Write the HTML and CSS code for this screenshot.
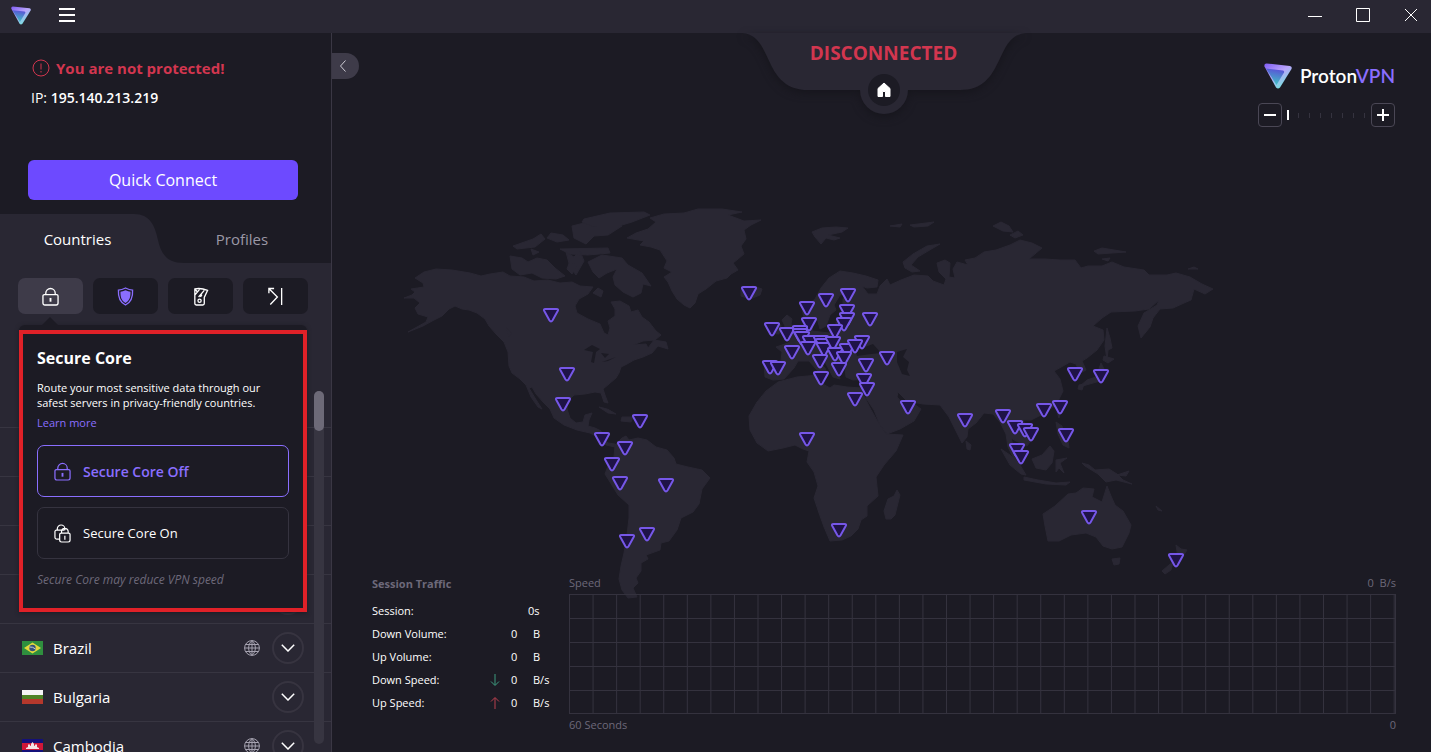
FILE: index.html
```html
<!DOCTYPE html>
<html lang="en">
<head>
    <meta charset="utf-8">
    <title>ProtonVPN</title>
    <link rel="stylesheet" href="styles.css">
</head>
<body>
<!-- shared icons -->
<svg class="defs" aria-hidden="true">
    <defs>
        <linearGradient id="logo-outer" x1="0" y1="0" x2="0.7" y2="1">
            <stop offset="0" stop-color="#7f5cf5"/>
            <stop offset="0.5" stop-color="#b9a5fb"/>
            <stop offset="1" stop-color="#6fe8dc"/>
        </linearGradient>
        <linearGradient id="logo-inner" x1="0.6" y1="0" x2="0.4" y2="1">
            <stop offset="0" stop-color="#5a4fd8"/>
            <stop offset="1" stop-color="#3fc7c4"/>
        </linearGradient>
        <symbol id="logo" viewBox="0 0 28 26">
            <path fill="url(#logo-outer)" d="M2.500 .5L26 3q2.500 .6 1.500 3L16 24.500q-2 2-4 0L.5 3.500Q-.2 .8 2.500 .5z"/>
            <path fill="url(#logo-inner)" d="M2 5.500L19 7.500q1.500 .4 1 2L12.500 22z"/>
        </symbol>
        <symbol id="lock" viewBox="0 0 18 20">
            <path class="line" d="M2.500 8h13a1.500 1.500 0 0 1 1.500 1.500v7.500a2 2 0 0 1-2 2H3a2 2 0 0 1-2-2V9.500A1.500 1.500 0 0 1 2.500 8zM4 8V6.500a5 5 0 0 1 10 0V8"/>
            <path class="line" stroke-width="2" d="M9 11.500v4"/>
        </symbol>
        <symbol id="globe" viewBox="0 0 16 16">
            <path class="line" d="M8 .6a7.400 7.400 0 1 0 0 14.800A7.400 7.400 0 1 0 8 .6zM8 .6v14.800M.6 8h14.800M1.800 4.500h12.400M1.800 11.500h12.400M8 .6C3.500 4.500 3.500 11.500 8 15.400M8 .6c4.500 3.900 4.500 10.900 0 14.800"/>
        </symbol>
        <symbol id="chevron" viewBox="0 0 14 8">
            <path class="line" d="M.8 .8L7 7L13.200 .8"/>
        </symbol>
        <path id="pin" transform="translate(9 9)" d="M-5.500 -6h11q2.400 0 1.200 2.100L1.600 5.200q-1.600 2.400-3.200 0L-6.700 -3.900Q-7.900 -6-5.500 -6z"/>
    </defs>
</svg>

<header class="titlebar">
    <svg class="app-logo"><use href="#logo"/></svg>
    <button class="menu-btn" aria-label="Menu"><span></span><span></span><span></span></button>
    <div class="window-btns">
        <button aria-label="Minimize"><svg viewBox="0 0 14 14"><path class="line" d="M0 8.500h14"/></svg></button>
        <button aria-label="Maximize"><svg viewBox="0 0 14 14"><path class="line" d="M.5 .5h13v13h-13z"/></svg></button>
        <button aria-label="Close"><svg viewBox="0 0 14 14"><path class="line" d="M1 1l12 12M13 1L1 13"/></svg></button>
    </div>
</header>

<div class="app">
    <aside class="sidebar">
        <section class="status">
            <p class="warning">
                <svg viewBox="0 0 18 18"><circle class="line" cx="9" cy="9" r="8"/><path class="line" d="M9 4.500v6M9 12v1.500"/></svg>
                You are not protected!
            </p>
            <p class="ip">IP: <b>195.140.213.219</b></p>
            <button class="quick-connect">Quick Connect</button>
        </section>

        <nav class="tabs">
            <svg class="tab-shape" viewBox="0 0 184 49"><path d="M0 0H134C150 0 155 12 158 26C161 41 168 49 184 49H0z"/></svg>
            <button class="tab active">Countries</button>
            <button class="tab">Profiles</button>
        </nav>

        <div class="panel">
            <div class="filters">
                <button class="filter active" aria-label="Secure Core"><svg viewBox="0 0 18 20"><use href="#lock"/></svg></button>
                <button class="filter shield" aria-label="NetShield">
                    <svg viewBox="0 0 18 20"><path class="line" d="M9 1q4 2.200 7.500 2.200C16.900 10 15.500 16 9 19C2.500 16 1.100 10 1.500 3.200Q5 3.200 9 1z"/><path class="fill" d="M9 3.500q3 1.500 5.300 1.600C14.500 10.500 13.300 14.500 9 17C4.700 14.500 3.500 10.500 3.700 5.100Q6 5 9 3.500z"/></svg>
                </button>
                <button class="filter" aria-label="Kill switch">
                    <svg viewBox="0 0 18 20"><path class="line" d="M3 2v15.500a1.500 1.500 0 0 0 1.500 1.500h7a1.500 1.500 0 0 0 1.500-1.500V11L16.500 3.500Q9 .5 3 2zM3.500 2.500L6 5.500M3 8.500L8 2.500M13 3.500L7 10.500M10.500 8l-1.500 2.500"/><circle class="line" cx="8" cy="14.500" r="1.700"/></svg>
                </button>
                <button class="filter" aria-label="Port forwarding">
                    <svg viewBox="0 0 18 20"><path class="line" d="M3.500 18.500L11 10.500L2.500 2M2 6.500V1.500h5.500M15.500 1v18"/></svg>
                </button>
            </div>

            <ul class="countries">
                <li><button class="expand" aria-label="Expand"><svg><use href="#chevron"/></svg></button></li>
                <li><button class="expand" aria-label="Expand"><svg><use href="#chevron"/></svg></button></li>
                <li><button class="expand" aria-label="Expand"><svg><use href="#chevron"/></svg></button></li>
                <li><button class="expand" aria-label="Expand"><svg><use href="#chevron"/></svg></button></li>
                <li>
                    <svg class="flag" viewBox="0 0 21 14"><path fill="#2f8f3e" d="M0 0h21v14H0z"/><path fill="#e3d83c" d="M10.500 1.500L19 7l-8.500 5.500L2 7z"/><circle cx="10.500" cy="7" r="3.200" fill="#34507c"/><path stroke="#c9d4cf" fill="none" d="M7.500 6q3-.5 6 2"/></svg>
                    <span class="name">Brazil</span>
                    <svg class="globe"><use href="#globe"/></svg>
                    <button class="expand" aria-label="Expand Brazil"><svg><use href="#chevron"/></svg></button>
                </li>
                <li>
                    <svg class="flag" viewBox="0 0 21 14"><path fill="#f5f5f5" d="M0 0h21v5H0z"/><path fill="#4f8427" d="M0 5h21v5H0z"/><path fill="#b5382c" d="M0 9h21v5H0z"/></svg>
                    <span class="name">Bulgaria</span>
                    <button class="expand" aria-label="Expand Bulgaria"><svg><use href="#chevron"/></svg></button>
                </li>
                <li>
                    <svg class="flag" viewBox="0 0 21 14"><path fill="#14107a" d="M0 0h21v14H0z"/><path fill="#cf1738" d="M0 4h21v7H0z"/><path fill="#f3e3e6" d="M4 10V9l2-1V6l1-1l1 1v1l1-.5V5l1.500-2L12 5v1.500l1 .5V6l1-1l1 1v2l2 1v1z"/></svg>
                    <span class="name">Cambodia</span>
                    <svg class="globe"><use href="#globe"/></svg>
                    <button class="expand" aria-label="Expand Cambodia"><svg><use href="#chevron"/></svg></button>
                </li>
            </ul>
            <div class="scrollbar"><div class="thumb"></div></div>

            <div class="popover">
                <div class="popover-body">
                    <h2>Secure Core</h2>
                    <p>Route your most sensitive data through our safest servers in privacy-friendly countries.</p>
                    <a href="#">Learn more</a>
                    <button class="option selected"><svg viewBox="0 0 18 20"><use href="#lock"/></svg>Secure Core Off</button>
                    <button class="option">
                        <svg viewBox="0 0 18 20"><path class="line" d="M5.500 16H3a2 2 0 0 1-2-2V8a1.500 1.500 0 0 1 1.500-1.500H11M3.500 6.500V5a4 4 0 0 1 8 0v1.500M7.500 9.500h8a1.500 1.500 0 0 1 1.500 1.500v6a2 2 0 0 1-2 2H8a2 2 0 0 1-2-2v-6a1.500 1.500 0 0 1 1.500-1.500zM8 9.500V8a3.500 3.500 0 0 1 7 0v1.500M11.500 12.500v4"/></svg>
                        Secure Core On
                    </button>
                    <p class="note">Secure Core may reduce VPN speed</p>
                </div>
            </div>
        </div>
    </aside>

    <main class="main">
        <svg class="map" viewBox="332 33 1099 719">
            <g class="land">
                <!-- north and central america -->
                <path d="M415 278L424 272L436 269L452 270L470 273L481 276L490 274L503 272L510 276L524 277L534 281L548 280L560 283L572 282L580 286L593 287L588 294L579 299L575 306L577 313L588 319L600 324L604 333L608 335L610 328L608 321L615 316L615 309L611 302L620 301L629 306L631 312L638 310L642 317L649 322L656 331L661 335L655 340L643 341L633 345L646 344L648 348L654 340L666 342L668 349L658 346L652 353L643 357L634 360L627 364L621 367L619 373L616 378L609 384L603 389L605 395L608 403L604 402L601 393L595 392L585 394L574 395L568 401L567 409L570 418L576 423L583 422L585 415L592 413L589 420L588 426L595 428L601 431L603 438L608 443L615 444L615 447L606 445L598 437L590 433L577 430L564 425L554 418L550 409L543 402L536 394L532 387L529 388L535 398L542 409L538 407L531 397L526 385L520 379L512 373L509 366L508 352L504 342L496 334L489 326L485 319L477 313L469 310L462 309L455 306L449 309L442 316L434 320L423 326L408 332L426 322L428 317L418 314L415 308L420 303L414 298L404 298L412 295L415 292L411 289L424 287L423 283z"/>
                <path d="M512 333l-6-5l3 9zM599 407q9 1 17 7l-8-1zM622 417h11l-2 5l-10-1z"/>
                <!-- arctic archipelago -->
                <path d="M510 256l12 2l6 4l9-4l10 2l8 8l10 8l-9 3l-14-1l-10-5l-12 2l-8-6zM513 246l20-7l8-5l4 5l-10 8l-18 2zM551 233l12 2l6 5l-12 2l-10-4zM566 252l8 5l6-6l4 10l-8 14l-6-8zM560 249l48-1l2 5l-22 2l-18-1zM572 226l12-3l10 4l16-3l12 2l-14 9l-14 1l-8 8l-12-6zM584 219l26-6l34-1l6 3l-18 7l-20 6l-20-2l-10-4zM588 262l14-7l20 3l6 7l14 8l9 13l-8-2l-2 9l-8 4l-10-5l-8-7l-2-8l4-8l-10 4l-8 5l-6-6z"/>
                <path d="M593 293l5-5l5 3l-2 6zM570 261l7 5l-5 8l-5-5zM531 249l8 3l-6 3z"/>
                <!-- greenland -->
                <path d="M627 238L636 233L648 229L656 222L650 218L664 214L684 213L698 209L722 209L742 212L728 215L744 221L761 220L751 225L744 230L746 239L741 246L744 254L738 259L733 263L738 270L731 274L727 278L716 281L706 289L698 294L695 303L690 308L684 305L677 299L672 291L668 282L664 277L672 272L664 268L667 261L660 250L651 247L640 245L644 241z"/>
                <!-- south america -->
                <path d="M615 445L622 438L626 436L629 440L638 438L647 440L656 447L667 450L674 458L676 464L688 467L702 470L710 478L702 489L699 504L693 512L681 518L677 530L669 541L661 543L660 550L646 555L648 559L641 563L641 571L636 578L638 583L633 588L637 597L628 598L622 590L619 579L621 566L624 553L627 535L629 518L629 505L618 495L610 482L605 474L608 466L614 457z"/>
                <!-- africa -->
                <path d="M778 382L797 377L818 375L821 383L830 388L834 385L847 387L862 388L864 396L870 408L878 422L886 434L903 435L896 451L884 465L876 477L878 496L867 506L867 516L861 520L858 529L851 536L842 540L830 541L824 527L819 513L814 498L818 486L814 472L807 462L809 451L803 449L795 445L783 448L768 451L757 443L750 430L749 416L757 402L766 391z"/>
                <path d="M897 490l3 5l-5 20l-4 4h-5l-2-8l4-12l6-3z"/>
                <!-- europe and asia -->
                <path d="M764 363L781 361L782 352L776 347L788 343L797 336L807 331L809 318L813 321L812 331L829 333L837 330L836 322L843 319L842 314L850 311L843 309L843 299L848 293L840 295L834 305L836 310L830 315L826 326L820 329L817 318L805 321L802 310L815 299L821 288L829 278L840 271L853 273L866 276L878 280L877 287L867 288L862 286L868 294L877 294L880 286L884 282L887 279L890 285L901 280L914 275L928 276L933 281L944 285L946 279L939 272L937 263L945 260L950 263L949 277L955 278L953 269L957 262L968 265L965 260L975 258L984 252L996 250L1010 245L1020 240L1032 243L1042 248L1029 259L1045 259L1060 260L1075 260L1081 268L1088 266L1102 266L1112 262L1124 267L1144 270L1149 275L1167 275L1176 273L1190 277L1202 284L1213 289L1205 294L1194 289L1191 300L1184 303L1173 308L1160 309L1153 318L1150 327L1141 338L1138 326L1144 313L1157 305L1159 300L1149 309L1135 311L1111 312L1102 318L1093 326L1103 330L1104 340L1097 350L1087 358L1082 361L1086 370L1080 373L1076 364L1070 362L1063 366L1054 371L1060 379L1063 391L1056 405L1043 414L1031 420L1023 420L1027 429L1033 438L1027 446L1016 441L1011 438L1014 449L1020 456L1023 464L1014 459L1008 447L1006 434L1000 422L993 414L984 413L976 423L968 429L967 437L962 443L957 433L949 417L940 405L923 404L907 401L898 392L897 397L904 405L914 404L921 409L914 421L900 429L887 434L880 425L874 410L866 398L866 387L867 379L853 380L846 377L845 368L838 370L840 379L833 377L825 362L817 354L815 359L825 368L828 376L823 377L809 361L798 361L794 368L784 379L773 380L765 377z"/>
                <path d="M784 340l2-4l-3-4l2-6l-3-6l5-5l5 4l-1 5l5 6l6 6l-4 6zM771 333l3-9l7 1l-2 9zM741 290l12-4l9 3l-2 6l-10 4l-9-3z"/>
                <!-- arctic islands north of eurasia -->
                <path d="M812 232l10-4l14-1l12 1l-6 4l-14 3l12 3l-6 2l-8-2l-5 6l-6-7zM890 226l12-2l-2 3zM910 225l24-3l-6 4l-14 1zM905 268l-2-6l10-8l14-8l13-2l-12 7l-10 6l-7 8l9 6l-8 1zM993 226l8-4l8 4l4 6l-10-1zM1010 235l8-4l5 4l-8 3zM1094 251l8-3l12 2l12 2l-14 1l-14 1zM1102 259l8-1l-2 3zM1188 269l6-2l4 2z"/>
                <!-- japan, islands of south-east asia, new guinea -->
                <path d="M1107 328l3 10l2 10l-4 2l-1 10l-2-14zM1104 356l10 3l-6 4l-5-3zM1101 363l4 8l-5 10l-14 4l-7 2l8-7l9-3zM1079 385l5-1l-2 6l-4-1zM1057 412l4-2l-2 8zM1056 422l6 4l2 8l4 6l1 8l-6-3l-5-11zM966 441l5 4l-1 5l-3-1zM1001 449l9 6l10 10l6 10l-5-1l-11-9zM1032 459l10-4l8-9l4 5l-2 12l-6 7l-10-2zM1024 477l14 3l18 3l14-1l-4 3l-20-1l-22-4zM1056 460l11-2l-7 5l4 10l-5-5l-3 4zM1085 466l-3-3l7 2l6 5l14-1l8 5l6 6l9 4l-8-2l-8-2l-10 2l-8-8zM1117 475l12-4l-3 5z"/>
                <!-- australia and new zealand -->
                <path d="M1043 514L1055 506L1068 494L1076 493L1083 488L1094 489L1092 497L1102 502L1107 486L1111 496L1115 505L1123 511L1131 525L1129 533L1122 547L1112 549L1103 546L1096 537L1086 533L1071 535L1059 541L1048 541L1045 526zM1112 559l8-1l-1 6l-5 1zM1176 545l5 4l6 1l-4 6l-5 2zM1162 571l7-6l4-3l-2 8l-6 4zM1156 506l6 5l-4-1z"/>
            </g>
            <g class="water">
                <path d="M584 350l8-5l8 4l-4 3l-2 11l-3-1l2-10zM601 353l8 1l-4 4zM602 362l14-5l-8 4zM855 346l8-4l2 5l8-3l8 9l-10 1l-14 2zM897 352l10-3l-4 8l6 5l-2 8l3 6l-8-2l-5-12z"/>
            </g>
            <g class="pins">
                <use href="#pin" x="542" y="306"/><use href="#pin" x="558" y="365"/><use href="#pin" x="554" y="395"/><use href="#pin" x="631" y="412"/>
                <use href="#pin" x="593" y="430"/><use href="#pin" x="616" y="439"/><use href="#pin" x="603" y="455"/><use href="#pin" x="611" y="474"/>
                <use href="#pin" x="657" y="476"/><use href="#pin" x="638" y="525"/><use href="#pin" x="618" y="532"/>
                <use href="#pin" x="740" y="284"/><use href="#pin" x="763" y="320"/><use href="#pin" x="778" y="325"/><use href="#pin" x="798" y="299"/>
                <use href="#pin" x="817" y="291"/><use href="#pin" x="839" y="286"/><use href="#pin" x="838" y="302"/><use href="#pin" x="838" y="310"/>
                <use href="#pin" x="835" y="315"/><use href="#pin" x="861" y="310"/><use href="#pin" x="800" y="315"/><use href="#pin" x="826" y="322"/>
                <use href="#pin" x="791" y="323"/><use href="#pin" x="791" y="326"/><use href="#pin" x="793" y="329"/><use href="#pin" x="801" y="333"/>
                <use href="#pin" x="799" y="339"/><use href="#pin" x="783" y="343"/><use href="#pin" x="761" y="358"/><use href="#pin" x="769" y="359"/>
                <use href="#pin" x="812" y="333"/><use href="#pin" x="814" y="336"/><use href="#pin" x="815" y="340"/><use href="#pin" x="824" y="334"/>
                <use href="#pin" x="811" y="352"/><use href="#pin" x="826" y="345"/><use href="#pin" x="838" y="341"/><use href="#pin" x="835" y="349"/>
                <use href="#pin" x="830" y="360"/><use href="#pin" x="853" y="333"/><use href="#pin" x="846" y="337"/><use href="#pin" x="812" y="369"/>
                <use href="#pin" x="857" y="356"/><use href="#pin" x="878" y="349"/><use href="#pin" x="855" y="371"/><use href="#pin" x="858" y="380"/>
                <use href="#pin" x="846" y="390"/><use href="#pin" x="899" y="398"/><use href="#pin" x="798" y="430"/><use href="#pin" x="830" y="521"/>
                <use href="#pin" x="956" y="411"/><use href="#pin" x="994" y="407"/><use href="#pin" x="1006" y="418"/><use href="#pin" x="1016" y="421"/>
                <use href="#pin" x="1022" y="425"/><use href="#pin" x="1008" y="441"/><use href="#pin" x="1012" y="448"/><use href="#pin" x="1035" y="401"/>
                <use href="#pin" x="1051" y="398"/><use href="#pin" x="1057" y="426"/><use href="#pin" x="1066" y="365"/><use href="#pin" x="1092" y="367"/>
                <use href="#pin" x="1080" y="508"/><use href="#pin" x="1167" y="551"/>
            </g>
        </svg>

        <div class="connection">
            <svg class="connection-shape" viewBox="0 0 284 82">
                <path d="M0 0C32 2 20 57 66 57H118A24 24 0 0 0 166 57H218C264 57 252 2 284 0z"/>
                <circle cx="142" cy="57" r="16"/>
                <path class="home" d="M142 50l6 5.500v8h-4.500v-5h-3v5H136v-8z"/>
            </svg>
            <span>DISCONNECTED</span>
        </div>

        <div class="top">
            <button class="collapse" aria-label="Collapse"><svg viewBox="0 0 6 12"><path class="line" d="M5.500 .5L.5 6l5 5.500"/></svg></button>
            <div class="tools">
                <div class="brand"><svg><use href="#logo"/></svg><span>Proton<em>VPN</em></span></div>
                <div class="zoom">
                    <button aria-label="Zoom out"><svg viewBox="0 0 12 12"><path class="line" d="M0 6h12"/></svg></button>
                    <input type="range" min="0" max="7" value="0" aria-label="Zoom">
                    <button aria-label="Zoom in"><svg viewBox="0 0 12 12"><path class="line" d="M0 6h12M6 0v12"/></svg></button>
                </div>
            </div>
        </div>

        <div class="traffic">
            <div class="session">
                <h3>Session Traffic</h3>
                <table>
                    <colgroup><col class="col-label"><col class="col-arrow"><col class="col-value"><col></colgroup>
                    <tr><th>Session:</th><td></td><td colspan="2" class="time">0s</td></tr>
                    <tr><th>Down Volume:</th><td></td><td>0</td><td>B</td></tr>
                    <tr><th>Up Volume:</th><td></td><td>0</td><td>B</td></tr>
                    <tr><th>Down Speed:</th><td><svg class="down" viewBox="0 0 10 12"><path class="line" d="M5 0v11M1 7.500L5 11.500l4-4"/></svg></td><td>0</td><td>B/s</td></tr>
                    <tr><th>Up Speed:</th><td><svg class="up" viewBox="0 0 10 12"><path class="line" d="M5 12V1M1 4.500L5 .5l4 4"/></svg></td><td>0</td><td>B/s</td></tr>
                </table>
            </div>
            <div class="graph">
                <div class="legend"><span>Speed</span><span>0 &nbsp;B/s</span></div>
                <div class="grid"></div>
                <div class="legend"><span>60 Seconds</span><span>0</span></div>
            </div>
        </div>
    </main>
</div>
</body>
</html>
```

FILE: styles.css
```css
* {
    box-sizing: border-box;
}

body {
    margin: 0;
    height: 100vh;
    display: flex;
    flex-direction: column;
    overflow: hidden;
    background: #1c1b24;
    color: #fff;
    font-family: "Segoe UI", "Open Sans", "Noto Sans", sans-serif;
    font-size: 11px;
}

h2, h3, p, ul {
    margin: 0;
    padding: 0;
}

button {
    padding: 0;
    border: 0;
    background: none;
    color: inherit;
    font: inherit;
}

svg {
    display: block;
}

.defs {
    position: absolute;
    width: 0;
    height: 0;
}

.line {
    fill: none;
    stroke: currentColor;
}

/* title bar */
.titlebar {
    flex: none;
    height: 33px;
    display: flex;
    align-items: center;
    padding: 0 13px 3px 11px;
    background: #292733;
}

.app-logo {
    width: 20px;
    height: 19px;
}

.menu-btn {
    display: grid;
    gap: 4px;
    width: 16px;
    margin-left: 28px;
}

.menu-btn span {
    height: 2px;
    background: #fff;
}

.window-btns {
    display: flex;
    gap: 34px;
    margin-left: auto;
}

.window-btns svg {
    width: 14px;
    height: 14px;
}

.app {
    flex: 1;
    min-height: 0;
    display: flex;
}

/* sidebar */
.sidebar {
    flex: none;
    width: 332px;
    display: flex;
    flex-direction: column;
    border-right: 1px solid #3a3744;
}

.status {
    padding: 25px 33px 14px 28px;
}

.warning {
    display: flex;
    align-items: center;
    gap: 6px;
    padding-left: 4px;
    color: #d2364f;
    font-size: 15px;
    font-weight: 700;
    line-height: 20px;
}

.warning svg {
    width: 18px;
    height: 18px;
}

.ip {
    margin-top: 10px;
    padding-left: 3px;
    font-size: 14px;
    line-height: 20px;
}

.ip b {
    font-weight: 600;
}

.quick-connect {
    width: 100%;
    height: 40px;
    margin-top: 52px;
    border-radius: 6px;
    background: #6d4aff;
    font-size: 16px;
}

.tabs {
    position: relative;
    flex: none;
    height: 49px;
    display: flex;
    padding-right: 8px;
}

.tab-shape {
    position: absolute;
    left: 0;
    top: 0;
    width: 184px;
    height: 49px;
    fill: #292733;
}

.tab {
    position: relative;
    flex: 1;
    padding-left: 6px;
    color: #9b98a6;
    font-size: 15px;
}

.tab.active {
    flex: none;
    width: 155px;
    padding-left: 0;
    color: #fff;
}

.panel {
    position: relative;
    flex: 1;
    min-height: 0;
    padding-top: 15px;
    background: #292733;
    overflow: hidden;
}

.filters {
    display: flex;
    gap: 10px;
    padding: 0 23px 0 18px;
}

.filter {
    flex: 1;
    height: 36px;
    display: grid;
    place-items: center;
    border-radius: 7px;
    background: #1c1b24;
}

.filter.active {
    background: #3e3b49;
}

.filter svg {
    width: 17px;
    height: 19px;
    stroke-width: 1.4;
}

.shield {
    color: #8a6eff;
}

.shield .fill {
    fill: currentColor;
}

.countries {
    list-style: none;
    margin-top: 113px;
}

.countries li {
    height: 49px;
    display: flex;
    align-items: center;
    padding: 0 27px 0 22px;
    border-top: 1px solid #373541;
    font-size: 15px;
}

.flag {
    width: 21px;
    height: 14px;
    margin-right: 10px;
}

.globe {
    width: 16px;
    height: 16px;
    margin-left: auto;
    margin-right: 12px;
    color: #a5a2b0;
}

.expand {
    width: 32px;
    height: 32px;
    display: grid;
    place-items: center;
    margin-left: auto;
    border: 2px solid #373440;
    border-radius: 50%;
}

.globe + .expand {
    margin-left: 0;
}

.expand svg {
    width: 14px;
    height: 8px;
    stroke-width: 1.5;
}

.scrollbar {
    position: absolute;
    top: 128px;
    right: 7px;
    bottom: 8px;
    width: 10px;
    border-radius: 5px;
    background: #373541;
}

.thumb {
    height: 40px;
    border-radius: 5px;
    background: #6d6a78;
}

.popover {
    position: absolute;
    top: 62px;
    left: 19px;
    width: 288px;
    padding-top: 5px;
    border-radius: 6px 6px 0 0;
    background: #1c1b24;
    box-shadow: 0 1px 4px #1c1b24;
}

.popover::before {
    content: "";
    position: absolute;
    top: -8px;
    left: 22px;
    border: 9px solid transparent;
    border-top: 0;
    border-bottom-color: #1c1b24;
}

.popover-body {
    padding: 12px 14px 21px;
    border: 4px solid #e02128;
}

.popover h2 {
    font-size: 16px;
    font-weight: 700;
    line-height: 24px;
}

.popover p {
    margin-top: 10px;
    line-height: 15px;
}

.popover a {
    display: block;
    margin-top: 5px;
    color: #8a6eff;
    line-height: 16px;
    text-decoration: none;
}

.option {
    width: 100%;
    height: 52px;
    display: flex;
    align-items: center;
    gap: 12px;
    margin-top: 14px;
    padding-left: 16px;
    border: 1px solid #35333f;
    border-radius: 7px;
    font-size: 13px;
}

.option + .option {
    margin-top: 10px;
}

.option.selected {
    border-color: #8a6eff;
    color: #8a6eff;
    font-size: 14px;
    font-weight: 600;
}

.option svg {
    width: 17px;
    height: 19px;
    stroke-width: 1.3;
}

.popover .note {
    margin-top: 13px;
    color: #6d697a;
    font-size: 12px;
    font-style: italic;
}

/* map side */
.main {
    position: relative;
    flex: 1;
    min-width: 0;
    display: flex;
    flex-direction: column;
    justify-content: space-between;
}

.map {
    position: absolute;
    left: 0;
    top: 0;
    width: 100%;
    height: 100%;
}

.land {
    fill: #292733;
    stroke: #292733;
    stroke-linejoin: round;
}

.water {
    fill: #1c1b24;
}

.pins {
    fill: #1f1347;
    stroke: #7657e8;
    stroke-width: 2;
}

.connection {
    position: absolute;
    top: 0;
    left: 0;
    right: 0;
    display: flex;
    justify-content: center;
    padding-left: 4px;
    color: #d2364f;
    font-size: 19px;
    font-weight: 700;
    line-height: 40px;
}

.connection span {
    position: relative;
}

.connection-shape {
    position: absolute;
    width: 284px;
    height: 82px;
    fill: #292733;
    filter: drop-shadow(0 3px 4px #16151c);
}

.connection-shape circle {
    fill: #1c1b24;
}

.connection-shape .home {
    fill: #fff;
    stroke: #fff;
    stroke-linejoin: round;
}

.top {
    position: relative;
    display: flex;
    align-items: flex-start;
    justify-content: space-between;
    padding: 20px 36px 0 0;
}

.collapse {
    width: 27px;
    height: 26px;
    display: grid;
    place-items: center;
    padding-right: 5px;
    border-radius: 0 13px 13px 0;
    background: #3e3b49;
}

.collapse svg {
    width: 6px;
    height: 12px;
    color: #cfcdd6;
}

.tools {
    padding-top: 10px;
}

.brand {
    display: flex;
    align-items: center;
    gap: 8px;
    padding-left: 6px;
    font-family: Lato, sans-serif;
    font-size: 19px;
    font-weight: 600;
    line-height: 26px;
}

.brand svg {
    width: 28px;
    height: 26px;
}

.brand em {
    color: #8a6eff;
    font-style: normal;
}

.zoom {
    display: flex;
    margin-top: 14px;
}

.zoom button {
    width: 24px;
    height: 24px;
    display: grid;
    place-items: center;
    border: 1px solid #4a4755;
    border-radius: 4px;
}

.zoom svg {
    width: 12px;
    height: 12px;
    stroke-width: 2;
}

.zoom input {
    appearance: none;
    width: 79px;
    height: 24px;
    margin: 0 5px;
    background: repeating-linear-gradient(to right, #35333f 0 1px, transparent 1px 11px) 0 10px / 100% 5px no-repeat;
}

.zoom input::-webkit-slider-thumb {
    appearance: none;
    width: 2px;
    height: 10px;
    background: #fff;
}

.traffic {
    position: relative;
    display: flex;
    gap: 18px;
    padding: 0 35px 18px 40px;
}

.session {
    flex: none;
    width: 179px;
}

.session h3 {
    color: #6d697a;
    font-size: 11px;
    font-weight: 700;
    line-height: 20px;
}

.session table {
    margin-top: 5px;
    border-spacing: 0;
    table-layout: fixed;
    width: 100%;
}

.session th,
.session td {
    height: 23px;
    padding: 0;
    font-weight: 400;
    text-align: left;
}

.col-label {
    width: 118px;
}

.col-arrow {
    width: 21px;
}

.col-value {
    width: 22px;
}

.session .time {
    padding-left: 17px;
}

.session svg {
    width: 10px;
    height: 12px;
}

.down {
    color: #3d9b7f;
}

.up {
    color: #b8404f;
}

.graph {
    flex: 1;
    min-width: 0;
}

.legend {
    display: flex;
    justify-content: space-between;
    padding-bottom: 2px;
    color: #6d697a;
    line-height: 18px;
}

.grid {
    height: 120px;
    border: 1px solid #34323e;
    background-image:
        linear-gradient(to right, #34323e 1px, transparent 1px),
        linear-gradient(to bottom, #34323e 1px, transparent 1px);
    background-size: calc(100% / 35) 100%, 100% 24px;
    background-position: -1px -1px;
}

.legend:last-child {
    padding: 2px 0 0;
}
```
